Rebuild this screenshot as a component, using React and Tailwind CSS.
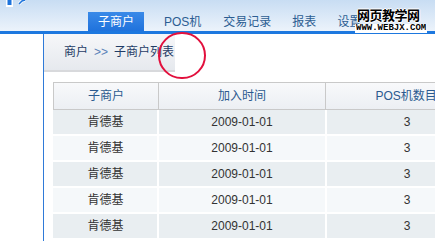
const rows = [
  { name: '肯德基', date: '2009-01-01', pos: 3 },
  { name: '肯德基', date: '2009-01-01', pos: 3 },
  { name: '肯德基', date: '2009-01-01', pos: 3 },
  { name: '肯德基', date: '2009-01-01', pos: 3 },
  { name: '肯德基', date: '2009-01-01', pos: 3 },
]

const cjk = "font-['Liberation_Sans','Noto_Sans_CJK_SC',sans-serif]"

function Logo() {
  return (
    <svg width="30" height="8" viewBox="0 0 30 8" className="absolute left-0 top-0">
      <rect x="6" y="-2" width="7" height="9" fill="#fff" />
      <rect x="7.5" y="-2" width="4" height="7" fill="#1e74dc" />
      <path d="M19 4 L22 1 L25 0" stroke="#fff" strokeWidth="3" fill="none" />
      <path d="M19 4 L22 1 L25 0" stroke="#1e74dc" strokeWidth="1.5" fill="none" />
    </svg>
  )
}

function Header() {
  const tabs = [
    { label: 'POS机', ml: 'ml-[20px]' },
    { label: '交易记录', ml: 'ml-[22px]' },
    { label: '报表', ml: 'ml-[21px]' },
    { label: '设置', ml: 'ml-[21px]' },
  ]
  return (
    <div className="relative h-[31px] bg-gradient-to-b from-[#c8ddf3] to-[#ecf3fb]">
      <Logo />
      <div className={`flex items-end h-full pl-[88px] text-[12px] ${cjk}`}>
        <div className="h-[19px] w-[56px] flex items-center justify-center bg-gradient-to-b from-[#3a8ae8] to-[#1f72dc] text-white">
          子商户
        </div>
        {tabs.map(t => (
          <div key={t.label} className={`h-[19px] flex items-center text-[#2c5d92] ${t.ml}`}>
            {t.label}
          </div>
        ))}
      </div>
      {/* watermark */}
      <div className="absolute left-[355px] top-[7px] flex flex-col items-start">
        <div className={`ml-[2px] text-[13px] font-bold leading-[16px] tracking-[-0.5px] text-black [text-shadow:1px_0_#fff,-1px_0_#fff,0_1px_#fff,0_-1px_#fff] font-['Noto_Sans_CJK_SC',sans-serif]`}>
          网页教学网
        </div>
        <div className="mt-[1px] bg-white px-[1px] text-[9px] font-bold leading-[9px] text-black font-['Liberation_Mono',monospace]">
          WWW.WEBJX.COM
        </div>
      </div>
    </div>
  )
}

function Table() {
  return (
    <div className={`w-[434px] text-[12px] ${cjk}`}>
      <div className="flex h-[28px] border border-[#c9c9c9] bg-gradient-to-b from-[#f8f9fb] to-[#eceff3] text-[#2b5a8f]">
        <div className="w-[105px] flex items-center justify-center border-r border-[#c9c9c9]">子商户</div>
        <div className="w-[168px] flex items-center justify-center border-r border-[#c9c9c9]">加入时间</div>
        <div className="w-[160px] flex items-center justify-center">POS机数目</div>
      </div>
      {rows.map((r, i) => (
        <div
          key={i}
          className={`flex h-[26px] border-b-2 border-white pl-[1px] text-[#333] ${i % 2 === 0 ? 'bg-[#e9eef1]' : 'bg-[#f5f8fa]'}`}
        >
          <div className="w-[105px] flex items-center justify-center border-r-2 border-white">{r.name}</div>
          <div className="w-[168px] flex items-center justify-center border-r-2 border-white">{r.date}</div>
          <div className="w-[160px] flex items-center justify-center">{r.pos}</div>
        </div>
      ))}
    </div>
  )
}

export default function App() {
  return (
    <div className="relative w-[435px] h-[241px] overflow-hidden bg-white">
      <Header />
      <div className="h-[3px] bg-[#1d78df]" />
      <div className="flex h-[207px]">
        <div className="w-[43px] shrink-0" />
        <div className="w-[1px] shrink-0 bg-[#2f7ad8]" />
        <div className="flex flex-col">
          <div className={`w-[131px] h-[38px] flex items-center pl-[20px] border-b-2 border-[#d8d9dc] bg-gradient-to-b from-[#f6f7f9] to-[#e6e9ee] text-[12px] text-[#1f3c66] ${cjk}`}>
            商户<span className="mx-[6px] text-[#5a80b8]">&gt;&gt;</span>子商户列表
          </div>
          <div className="mt-[10px] ml-[9px]">
            <Table />
          </div>
        </div>
      </div>
      {/* annotation circle */}
      <div className="absolute left-[158px] top-[32px] w-[48px] h-[47px] rounded-full border-2 border-[#e2103d]" />
    </div>
  )
}
